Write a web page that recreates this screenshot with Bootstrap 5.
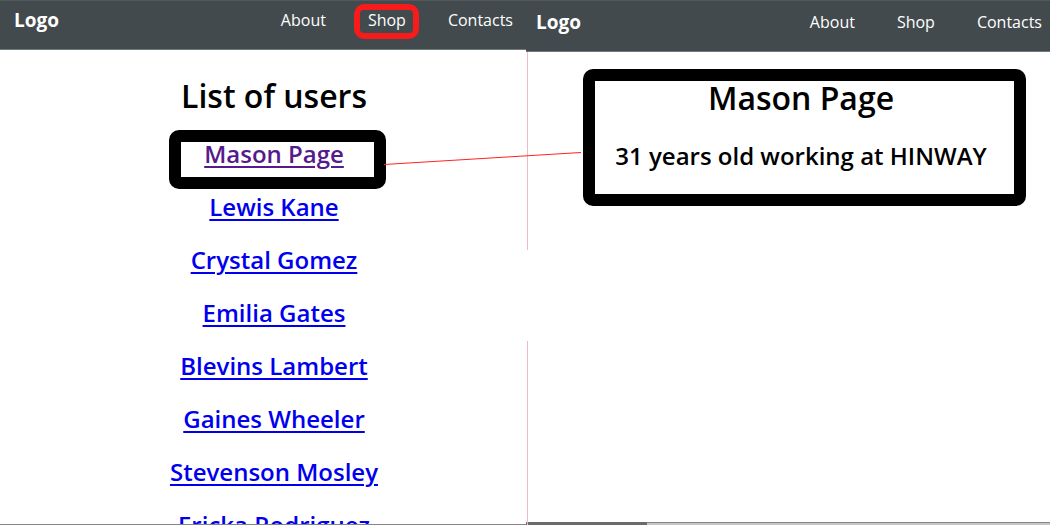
<!DOCTYPE html>
<html lang="en">
<head>
<meta charset="utf-8">
<meta name="viewport" content="width=device-width, initial-scale=1">
<title>Users</title>
<link href="https://cdn.jsdelivr.net/npm/bootstrap@5.3.0/dist/css/bootstrap.min.css" rel="stylesheet">
<style>
body{font-family:"Open Sans","Noto Sans",sans-serif;background:#fff;color:#000}
.screens{height:100vh;min-height:525px}
.screen-list{flex:0 0 calc(50% + 1px);border-bottom:1px solid #858585}
.screen-user{min-width:0}
.topbar{background:#424a4d;border-top:1px solid #51595c;border-bottom:1px solid #70787b;align-items:flex-start}
.screen-list .topbar{height:50px;padding:6px 13px 6px 14px}
.screen-user .topbar{height:52px;padding:8px 8px 8px 10px}
.topbar a{color:#fff;text-decoration:none;line-height:26px}
.topbar .brand{font-size:19px;font-weight:700}
.menu{font-size:16px;gap:42px}
h1{font-size:32px;line-height:44px;font-weight:600;margin:0}
h2{font-size:24px;line-height:33px;font-weight:600;margin:0}
.users{padding:24px 0 0 22px}
.users ul{margin-top:19px;gap:20px}
.users a{color:#00e;text-decoration-thickness:2px;text-underline-offset:3px}
.users a.seen{color:#551a8b}
.profile{padding:24px 0 0 26px}
.profile h2{margin-top:19px}
.mark-frame{position:absolute;border:12px solid #000;border-radius:10px;pointer-events:none}
.frame-link{inset:-7px -42px -19px -35px}
.frame-profile{inset:-7px -39px -34px -32px}
.frame-menu{inset:-3px -13px -6px -14px;border:6px solid #f81b1b;border-radius:10px}
.divider{position:absolute;left:calc(50% + 2px);top:52px;bottom:0;width:1px;background:linear-gradient(#f0bcc2 198px,transparent 198px 289px,#f0bcc2 289px)}
.connector{position:absolute;left:calc(50% - 141px);top:152px}
.scroll-track{height:3px;background:linear-gradient(#858585 1px,#c6c6c6 1px)}
.scroll-thumb{width:23%;height:3px;background:#6b6b6b}
</style>
</head>
<body>
<div class="screens d-flex position-relative overflow-hidden">
  <section class="screen-list d-flex flex-column overflow-hidden">
    <nav class="topbar d-flex justify-content-between flex-shrink-0">
      <a class="brand" href="#">Logo</a>
      <div class="menu d-flex">
        <a href="#">About</a>
        <a href="#" class="position-relative">Shop<span class="mark-frame frame-menu"></span></a>
        <a href="#">Contacts</a>
      </div>
    </nav>
    <main class="users text-center">
      <h1>List of users</h1>
      <ul class="list-unstyled d-flex flex-column mb-0">
        <li><h2><span class="position-relative d-inline-block"><a class="seen" href="#mason">Mason Page</a><span class="mark-frame frame-link"></span></span></h2></li>
        <li><h2><a href="#">Lewis Kane</a></h2></li>
        <li><h2><a href="#">Crystal Gomez</a></h2></li>
        <li><h2><a href="#">Emilia Gates</a></h2></li>
        <li><h2><a href="#">Blevins Lambert</a></h2></li>
        <li><h2><a href="#">Gaines Wheeler</a></h2></li>
        <li><h2><a href="#">Stevenson Mosley</a></h2></li>
        <li><h2><a href="#">Ericka Rodriguez</a></h2></li>
      </ul>
    </main>
  </section>
  <section class="screen-user flex-fill d-flex flex-column">
    <nav class="topbar d-flex justify-content-between flex-shrink-0">
      <a class="brand" href="#">Logo</a>
      <div class="menu d-flex">
        <a href="#">About</a>
        <a href="#">Shop</a>
        <a href="#">Contacts</a>
      </div>
    </nav>
    <main class="profile text-center" id="mason">
      <div class="position-relative d-inline-block">
        <h1>Mason Page</h1>
        <h2>31 years old working at HINWAY</h2>
        <span class="mark-frame frame-profile"></span>
      </div>
    </main>
    <div class="scroll-track mt-auto"><div class="scroll-thumb"></div></div>
  </section>
  <div class="divider"></div>
  <svg class="connector" width="197" height="13" viewBox="0 0 197 13" aria-hidden="true"><path d="M0 12.5 197 .5" stroke="#f22" fill="none"/></svg>
</div>
<script src="https://cdn.jsdelivr.net/npm/bootstrap@5.3.0/dist/js/bootstrap.bundle.min.js"></script>
</body>
</html>
